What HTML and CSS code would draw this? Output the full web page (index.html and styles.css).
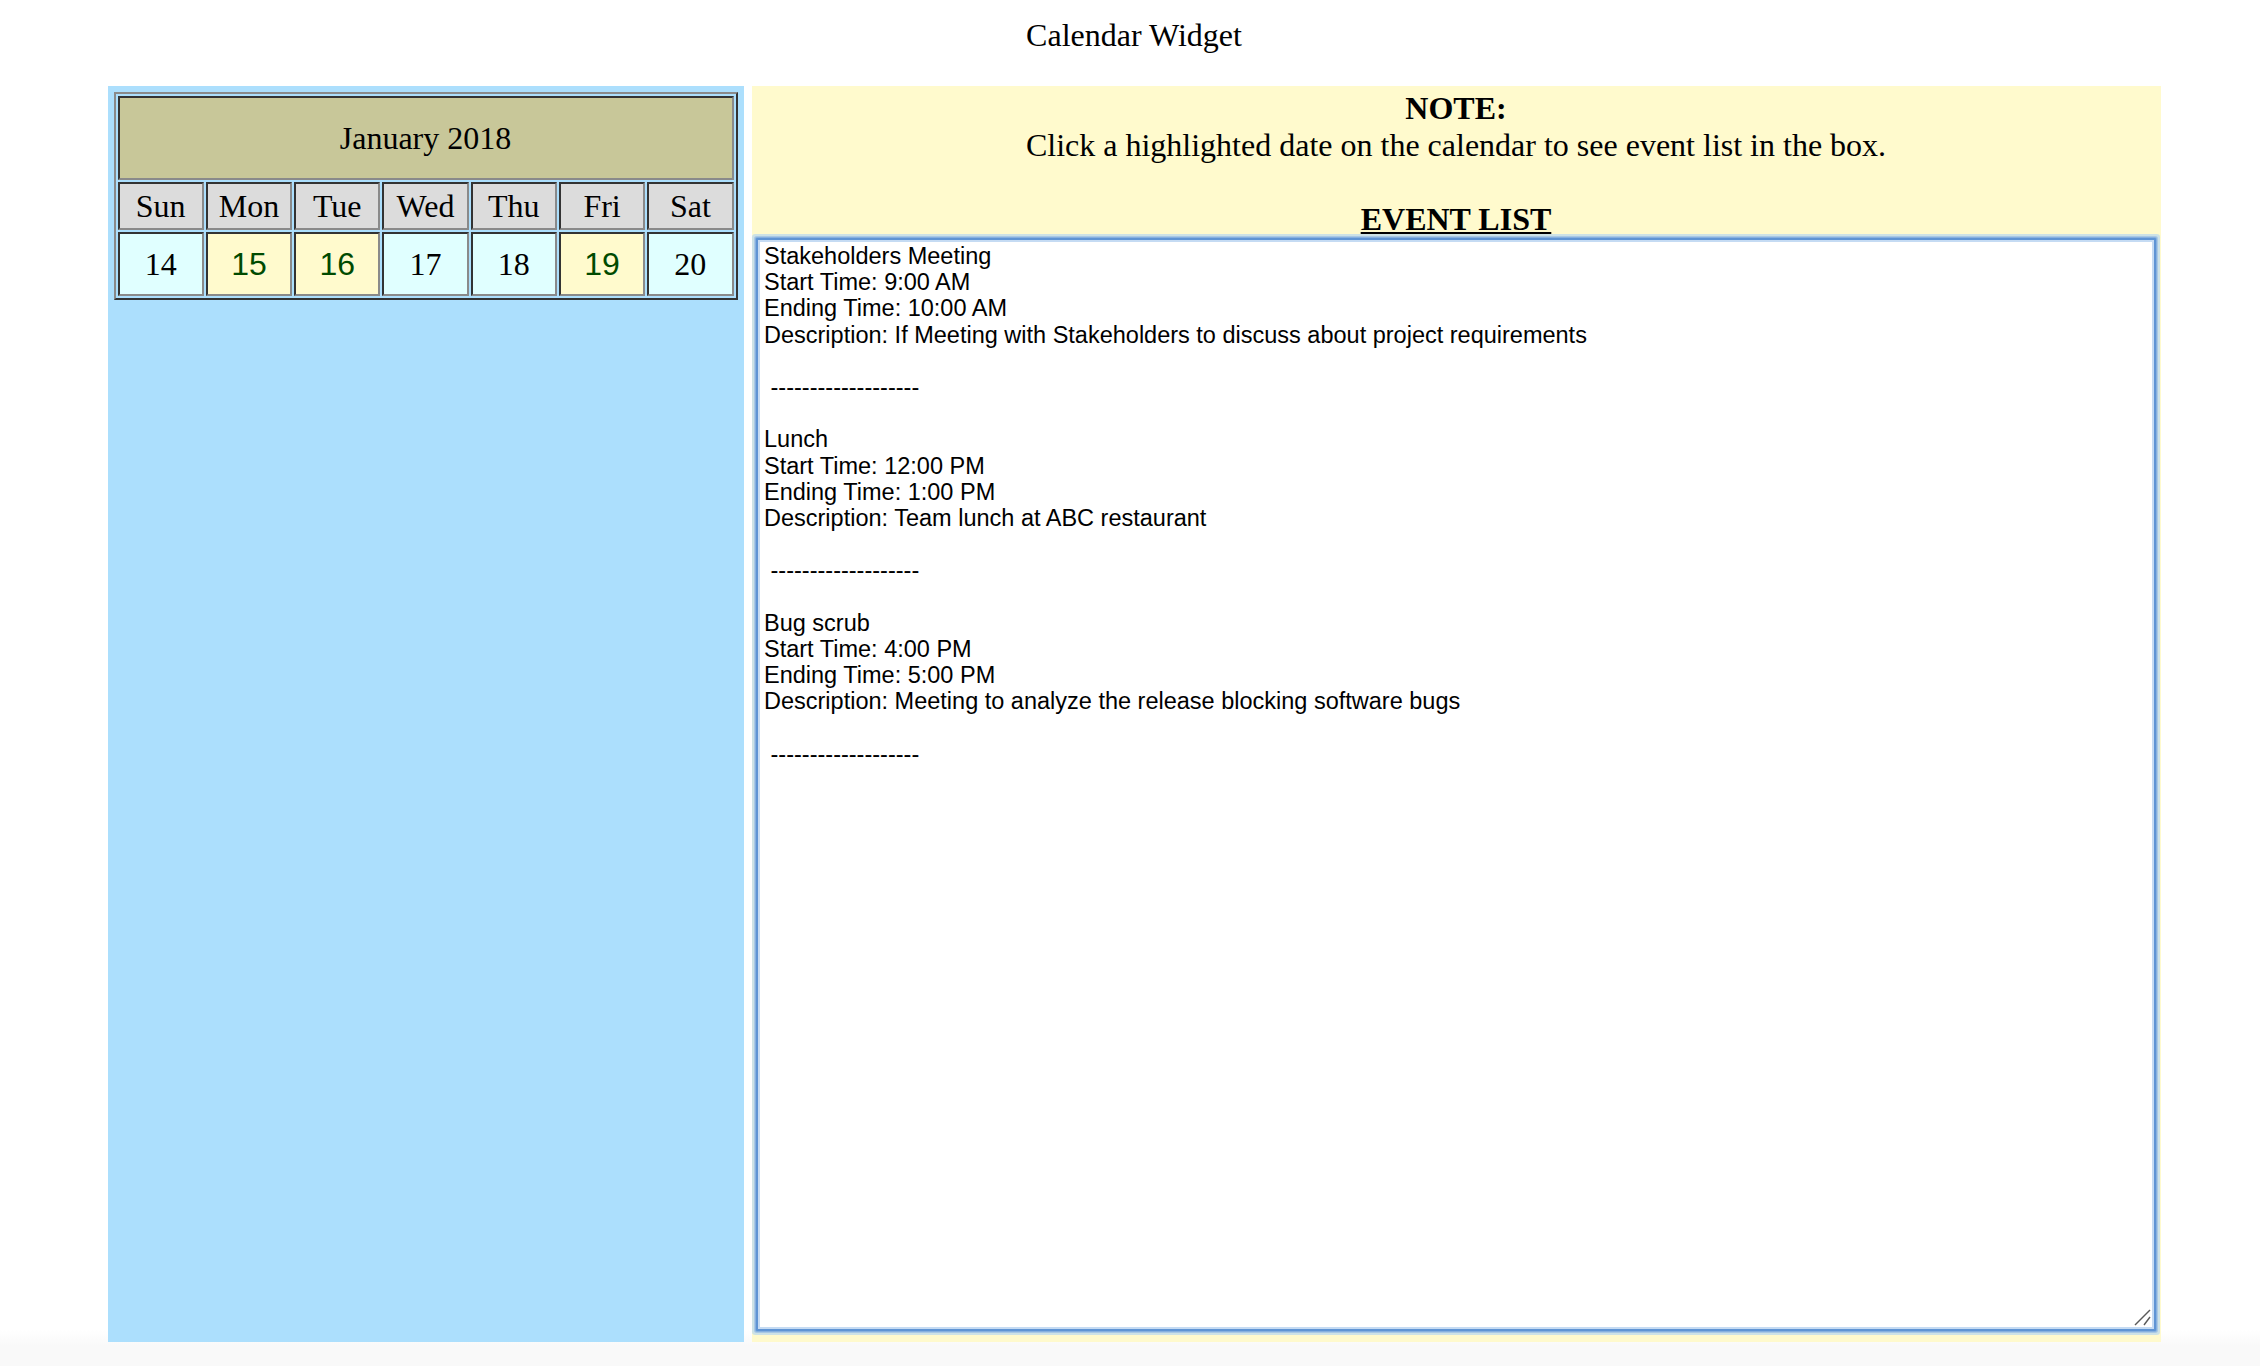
FILE: index.html
```html
<!DOCTYPE html>
<html>
<head>
<meta charset="utf-8">
<title>Calendar Widget</title>
<link rel="stylesheet" href="styles.css">
</head>
<body>
<div class="title">Calendar Widget</div>
<div class="panels">
  <div class="cal-panel">
    <table class="cal">
      <tr><td class="month" colspan="7">January 2018</td></tr>
      <tr class="days">
        <td>Sun</td><td>Mon</td><td>Tue</td><td>Wed</td><td>Thu</td><td>Fri</td><td>Sat</td>
      </tr>
      <tr class="dates">
        <td>14</td><td class="hl">15</td><td class="hl">16</td><td>17</td><td>18</td><td class="hl">19</td><td>20</td>
      </tr>
    </table>
  </div>
  <div class="event-panel">
    <div class="note">NOTE:</div>
    <div class="hint">Click a highlighted date on the calendar to see event list in the box.</div>
    <div class="blank">&nbsp;</div>
    <div class="list-title"><u>EVENT LIST</u></div>
    <div class="events-wrap">
      <textarea class="events">Stakeholders Meeting
Start Time: 9:00 AM
Ending Time: 10:00 AM
Description: If Meeting with Stakeholders to discuss about project requirements

 -------------------

Lunch
Start Time: 12:00 PM
Ending Time: 1:00 PM
Description: Team lunch at ABC restaurant

 -------------------

Bug scrub
Start Time: 4:00 PM
Ending Time: 5:00 PM
Description: Meeting to analyze the release blocking software bugs

 -------------------</textarea>
      <svg class="grip" width="18" height="18" viewBox="0 0 18 18" aria-hidden="true">
        <line x1="1" y1="16" x2="16" y2="1" stroke="#5a5a5a" stroke-width="1.4"/>
        <line x1="10" y1="16" x2="16" y2="8" stroke="#5a5a5a" stroke-width="1.4"/>
      </svg>
    </div>
  </div>
</div>
</body>
</html>
```
FILE: styles.css
```css
html {
  background: linear-gradient(to bottom, #ffffff 0, #ffffff 1330px, #f9f9f9 1346px, #f9f9f9 100%);
  min-height: 100%;
}

body {
  margin: 0;
  padding: 17px 0 0 8px;
  font-family: "Liberation Serif", "Times New Roman", serif;
  font-size: 32px;
  line-height: normal;
  color: #000;
}

.title {
  text-align: center;
  margin-bottom: 32px;
}

.panels {
  display: grid;
  grid-template-columns: 636px 1409px;
  column-gap: 8px;
  justify-content: center;
  height: 1256px;
}

.cal-panel {
  background: #acdffd;
  padding: 6px;
}

.cal {
  width: 100%;
  table-layout: fixed;
  border-collapse: separate;
  border-spacing: 2px;
  border-style: solid;
  border-width: 2px;
  border-color: #8a8a8a #333333 #333333 #8a8a8a;
}

.cal td {
  border-style: solid;
  border-width: 2px;
  border-color: #333333 #8a8a8a #8a8a8a #333333;
  padding: 0;
  text-align: center;
  vertical-align: middle;
}

.month {
  background: #c8c799;
  height: 80px;
}

.days td {
  background: #dcdcdc;
  height: 44px;
}

.dates td {
  background: #e0ffff;
  height: 60px;
}

.dates td.hl {
  background: #fffacd;
  color: #004a00;
  font-family: "Liberation Sans", Arial, sans-serif;
}

.event-panel {
  background: #fffacd;
  padding-top: 4px;
  text-align: center;
}

.note,
.list-title {
  font-weight: bold;
}

.list-title u {
  text-decoration: underline;
}

.events-wrap {
  position: relative;
  width: 1400px;
  height: 1093px;
  margin: 0 auto;
}

.events {
  display: block;
  box-sizing: border-box;
  width: 100%;
  height: 100%;
  margin: 0;
  padding: 3px 3px 3px 6px;
  text-align: left;
  font-family: "Liberation Sans", Arial, Helvetica, sans-serif;
  font-size: 23.5px;
  line-height: 26.2px;
  color: #000;
  background: #fff;
  border: 2px solid #5f94d4;
  border-radius: 1px;
  outline: none;
  box-shadow: inset 0 0 0 2px #c5dbf3, 0 0 0 1px #86b0df, 0 0 0 2px #a9c8e4, 0 0 0 4px #cde2e6;
  overflow: hidden;
  resize: none;
}

.grip {
  position: absolute;
  right: 4px;
  bottom: 4px;
}
```
